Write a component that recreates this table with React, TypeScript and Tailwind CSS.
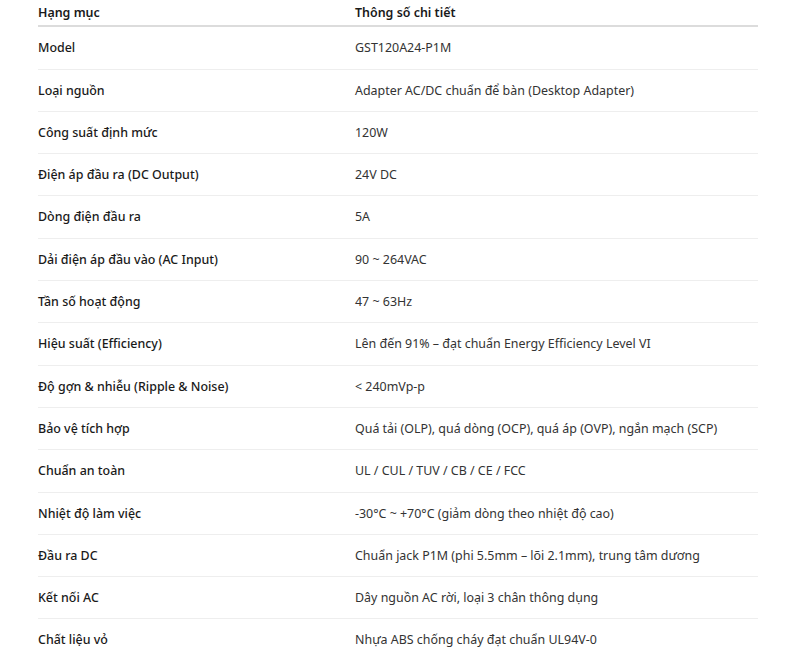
import React from "react";

const rows: [string, string][] = [
  ["Model", "GST120A24-P1M"],
  ["Loại nguồn", "Adapter AC/DC chuẩn để bàn (Desktop Adapter)"],
  ["Công suất định mức", "120W"],
  ["Điện áp đầu ra (DC Output)", "24V DC"],
  ["Dòng điện đầu ra", "5A"],
  ["Dải điện áp đầu vào (AC Input)", "90 ~ 264VAC"],
  ["Tần số hoạt động", "47 ~ 63Hz"],
  ["Hiệu suất (Efficiency)", "Lên đến 91% – đạt chuẩn Energy Efficiency Level VI"],
  ["Độ gợn & nhiễu (Ripple & Noise)", "< 240mVp-p"],
  ["Bảo vệ tích hợp", "Quá tải (OLP), quá dòng (OCP), quá áp (OVP), ngắn mạch (SCP)"],
  ["Chuẩn an toàn", "UL / CUL / TUV / CB / CE / FCC"],
  ["Nhiệt độ làm việc", "-30°C ~ +70°C (giảm dòng theo nhiệt độ cao)"],
  ["Đầu ra DC", "Chuẩn jack P1M (phi 5.5mm – lõi 2.1mm), trung tâm dương"],
  ["Kết nối AC", "Dây nguồn AC rời, loại 3 chân thông dụng"],
  ["Chất liệu vỏ", "Nhựa ABS chống cháy đạt chuẩn UL94V-0"],
];

export default function App() {
  return (
    <div className="min-h-[659px] bg-white pl-[38px] pr-[33px] text-[12.45px] leading-[17.3px]" style={{ fontFamily: '"Noto Sans", "Open Sans", sans-serif' }}>
      <div className="w-[720px]">
        <div className="flex border-b-2 border-[#dcdcdc] pt-[4px] pb-[4px]">
          <div className="w-[317px] font-semibold text-[#1a1a1a]">Hạng mục</div>
          <div className="flex-1 font-semibold text-[#1a1a1a]">Thông số chi tiết</div>
        </div>
        {rows.map(([k, v], i) => (
          <div key={i} className="flex border-b border-[#eeeeee] py-[12px]">
            <div className="w-[317px] font-medium text-[#1a1a1a]">{k}</div>
            <div className="flex-1 text-[#333333]">{v}</div>
          </div>
        ))}
      </div>
    </div>
  );
}
